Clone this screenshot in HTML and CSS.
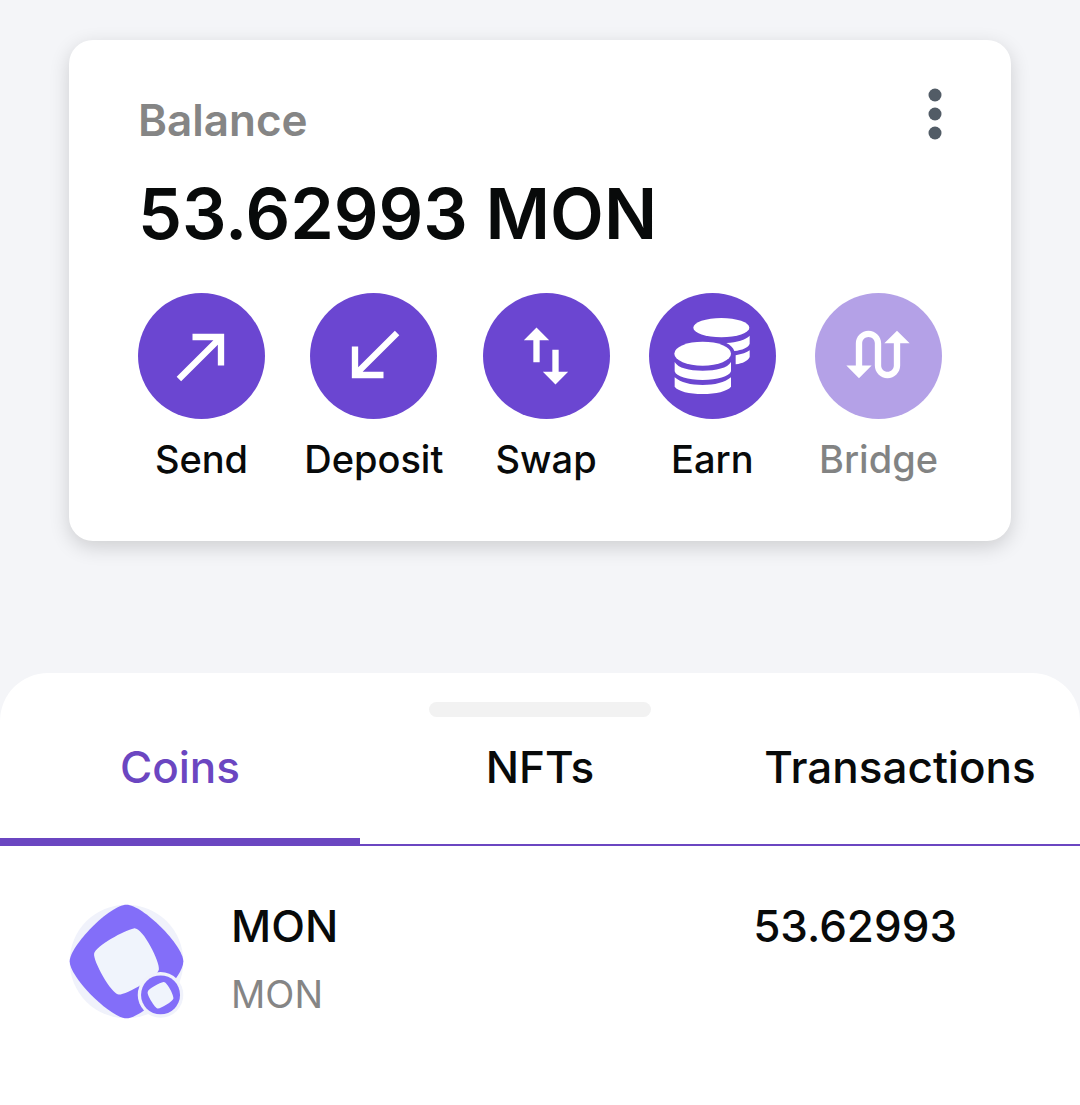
FILE: index.html
```html
<!DOCTYPE html>
<html lang="en">
<head>
  <meta charset="UTF-8">
  <title>Wallet</title>
  <meta name="viewport" content="width=device-width, initial-scale=1.0">
  <link rel="stylesheet" href="styles.css">
</head>
<body>

  <section class="card">
    <div class="card-top">
      <h2>Balance</h2>
      <button class="menu" aria-label="More options">
        <svg viewBox="0 0 14 52" width="14" height="52">
          <circle cx="7" cy="7" r="6.5"/>
          <circle cx="7" cy="26" r="6.5"/>
          <circle cx="7" cy="45" r="6.5"/>
        </svg>
      </button>
    </div>
    <p class="amount">53.62993 MON</p>

    <div class="actions">
      <button class="action">
        <span class="circle">
          <svg viewBox="0 0 24 24"><path d="M9 5v2h6.59L4 18.59 5.41 20 17 8.41V15h2V5z"/></svg>
        </span>
        Send
      </button>
      <button class="action">
        <span class="circle">
          <svg viewBox="0 0 24 24"><path d="M15 19v-2H8.41L20 5.41 18.59 4 7 15.59V9H5v10z"/></svg>
        </span>
        Deposit
      </button>
      <button class="action">
        <span class="circle">
          <svg viewBox="0 0 24 24"><path d="M9 3L5 6.99h3V14h2V6.99h3L9 3zm7 14.01V10h-2v7.01h-3L15 21l4-3.99h-3z"/></svg>
        </span>
        Swap
      </button>
      <button class="action">
        <span class="circle">
          <svg viewBox="0 0 228 228">
            <ellipse cx="142" cy="29" rx="84" ry="29"/>
            <path d="M227 53v24c-4 12-22 19-46 22-4-10-12-18-24-24 32-2 58-10 70-22z"/>
            <path d="M227 97v20c-6 12-20 19-42 22v-27c18-3 34-8 42-15z"/>
            <ellipse cx="86" cy="107" rx="85" ry="36"/>
            <path d="M2 132c10 18 43 26 84 26s75-8 85-26v28c-5 16-41 26-85 26S6 176 2 160z"/>
            <path d="M2 178c18 16 48 23 84 23s66-7 85-23v28c-11 14-45 22-85 22S12 220 2 206z"/>
          </svg>
        </span>
        Earn
      </button>
      <button class="action" disabled>
        <span class="circle">
          <svg viewBox="0 0 24 24"><path d="M18 4l-4 4h3v7c0 1.1-.9 2-2 2s-2-.9-2-2V8c0-2.21-1.79-4-4-4S5 5.79 5 8v7H2l4 4 4-4H7V8c0-1.1.9-2 2-2s2 .9 2 2v7c0 2.21 1.79 4 4 4s4-1.79 4-4V8h3l-4-4z"/></svg>
        </span>
        Bridge
      </button>
    </div>
  </section>

  <section class="sheet">
    <div class="handle"></div>
    <div class="tabs">
      <button class="tab active">Coins</button>
      <button class="tab">NFTs</button>
      <button class="tab">Transactions</button>
    </div>

    <div class="coin">
      <svg class="coin-logo" viewBox="0 0 348 348">
        <circle cx="174" cy="174" r="172" fill="#f0f2fb"/>
        <path fill="#836ef9" d="M174 2C222 2 346 124 346 174S222 346 174 346 2 222 2 174 124 2 174 2z"/>
        <path fill="#f0f4fc" d="M196 74C222 68 276 176 272 198S172 276 150 274 72 172 76 150 170 78 196 74z"/>
        <circle cx="277" cy="275" r="69" fill="#f0f2fb"/>
        <circle cx="277" cy="275" r="59" fill="#836ef9"/>
        <path fill="#f0f4fc" d="M286 236C296 234 318 277 316 286S276 318 268 316 236 276 238 266 276 238 286 236z"/>
      </svg>
      <div class="coin-name">
        <h3>MON</h3>
        <p>MON</p>
      </div>
      <div class="coin-value">53.62993</div>
    </div>
  </section>

</body>
</html>
```
FILE: styles.css
```css
body {
  background-color: #f4f5f8;
  margin: 0;
  font-family: Inter, Arial, sans-serif;
  color: #080a0a;
  display: flex;
  flex-direction: column;
  min-height: 100vh;
}
h2, h3, p {
  margin: 0;
}
button {
  background: none;
  border: none;
  padding: 0;
  font-family: inherit;
  color: inherit;
  cursor: pointer;
}
.card {
  background: white;
  margin: 40px 69px 132px;
  padding: 48px 69px 54px;
  border-radius: 24px;
  box-shadow: 0 6px 20px rgba(0, 0, 0, 0.16);
}
.card-top {
  display: flex;
  justify-content: space-between;
  align-items: flex-start;
}
h2 {
  font-size: 44px;
  line-height: 64px;
  font-weight: 600;
  color: #858585;
}
.menu {
  padding: 0 -4px;
}
.menu svg {
  display: block;
  fill: #525c66;
}
.amount {
  font-size: 70px;
  line-height: 124px;
  font-weight: 600;
}
.actions {
  display: flex;
  justify-content: space-between;
  margin-top: 17px;
}
.action {
  display: flex;
  flex-direction: column;
  align-items: center;
  gap: 12px;
  font-size: 38px;
  line-height: 56px;
  font-weight: 500;
}
.circle {
  display: flex;
  align-items: center;
  justify-content: center;
  width: 127px;
  height: 126px;
  border-radius: 50%;
  background: #6b46d1;
}
.circle svg {
  width: 76px;
  height: 76px;
  fill: white;
}
.action:disabled {
  opacity: 0.5;
  cursor: default;
}
.sheet {
  flex: 1;
  background: white;
  border-radius: 48px 48px 0 0;
}
.handle {
  width: 222px;
  height: 15px;
  margin: 29px auto 0;
  border-radius: 8px;
  background: #f2f2f2;
}
.tabs {
  display: grid;
  grid-template-columns: repeat(3, 1fr);
  border-bottom: 2px solid #6b46c1;
}
.tab {
  font-size: 44px;
  line-height: 64px;
  font-weight: 500;
  padding: 18px 0 39px;
  border-bottom: 6px solid transparent;
}
.tab.active {
  color: #6b46c1;
  border-color: #6b46c1;
}
.coin {
  display: flex;
  align-items: flex-start;
  padding: 58px 123px 0 69px;
}
.coin-logo {
  width: 115px;
  height: 115px;
}
.coin-name {
  flex: 1;
  margin-left: 47px;
}
h3, .coin-value {
  font-size: 44px;
  line-height: 44px;
  font-weight: 500;
}
.coin-name p {
  font-size: 38px;
  line-height: 56px;
  margin-top: 18px;
  color: #858585;
}
```
